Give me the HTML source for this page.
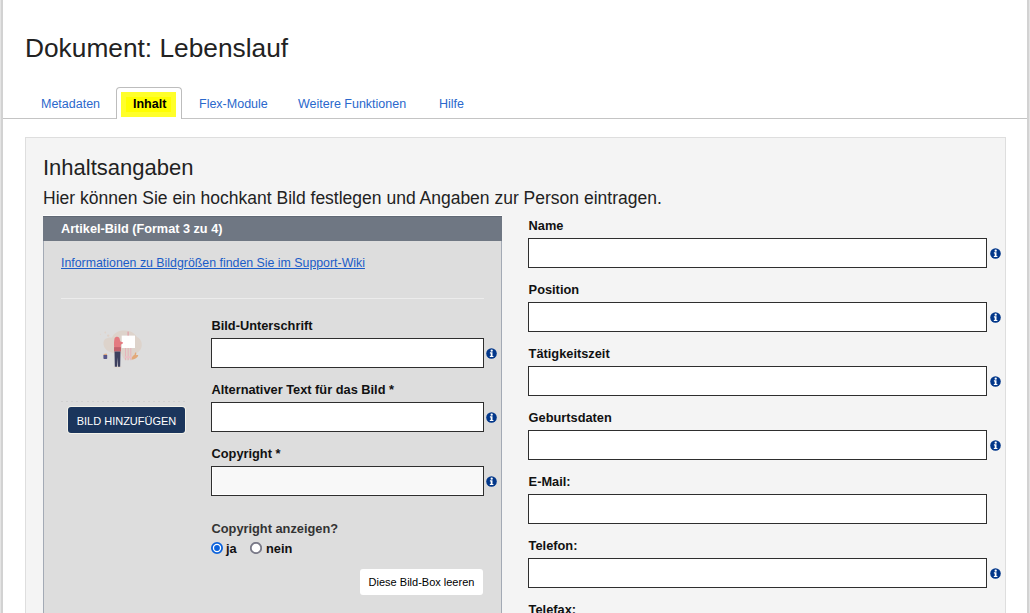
<!DOCTYPE html>
<html><head><meta charset="utf-8">
<style>
*{box-sizing:border-box;margin:0;padding:0}
html,body{width:1030px;height:613px;overflow:hidden;background:#fff;font-family:"Liberation Sans",sans-serif;color:#222}
.abs{position:absolute}
#lb{left:0;top:0;width:3px;height:613px;background:linear-gradient(90deg,#e4e4e4 0,#e4e4e4 1px,#d2d2d2 1px,#d2d2d2 3px)}
#rb{left:1027px;top:0;width:3px;height:613px;background:linear-gradient(90deg,#d2d2d2 0,#d2d2d2 2px,#e4e4e4 2px)}
h1{position:absolute;left:25px;top:33px;font-size:26.3px;font-weight:normal;color:#222;line-height:30px;white-space:nowrap}
#tabline{left:3px;top:118px;width:1024px;height:1px;background:#c4c4c4}
.tab{position:absolute;top:97px;font-size:12.5px;color:#2a68cc;white-space:nowrap;line-height:14px}
#acttab{left:116px;top:87px;width:66px;height:32px;border-radius:4px 4px 0 0;border:1px solid #bdbdbd;border-bottom:none;background:#fff}
#yel{left:121px;top:92px;width:55px;height:25px;background:#ffff2a}
#yel2{left:126px;top:97px;width:45px;height:15px;background:#ffff00}
#panel{left:25px;top:137px;width:981px;height:500px;background:#f4f4f4;border:1px solid #dedede}
h2{position:absolute;left:43px;top:156px;font-size:22px;font-weight:normal;color:#222;line-height:24px;white-space:nowrap}
.sub{position:absolute;left:43px;top:188px;font-size:17.5px;color:#222;line-height:20px;white-space:nowrap}
#box{left:43px;top:217px;width:459px;height:420px;background:#dddddd;border-left:1px solid #a3aab5;border-right:1px solid #a3aab5}
#boxh{left:43px;top:216px;width:459px;height:25px;background:#6f7783;border-top:1px solid #606874;box-shadow:0 -1px 0 #fff}
.bh{position:absolute;left:61px;top:222px;font-size:12.7px;font-weight:bold;color:#fff;line-height:14px;white-space:nowrap}
.link{position:absolute;left:61px;top:256px;font-size:12.35px;color:#1a5cc8;text-decoration:underline;line-height:14px;white-space:nowrap}
#sep{left:61px;top:298px;width:423px;height:1px;background:#ececec}
#dots{left:61px;top:401px;width:124px;height:1px;background:repeating-linear-gradient(90deg,#d0d0d0 0,#d0d0d0 2px,transparent 2px,transparent 5.1px)}
#addbtn{left:68px;top:407px;width:117px;height:26px;background:#1b355c;border-radius:3px;box-shadow:0 0 0 1px rgba(250,248,238,.75);overflow:hidden;color:#fff;font-size:11px;line-height:28px;text-align:center;white-space:nowrap}
.lbl{position:absolute;font-size:12.8px;font-weight:bold;color:#111;line-height:14px;white-space:nowrap}
.inp{position:absolute;height:30px;background:#fff;border:1px solid #2e2e2e;border-radius:0;box-shadow:inset 1px -1px 0 #fff}
.info{position:absolute;width:11px;height:11px}
#clr{left:360px;top:569px;width:123px;height:26px;background:#fff;border-radius:3px;font-size:11px;line-height:26px;text-align:center;color:#000;white-space:nowrap}
.radio{position:absolute;width:12px;height:12px;border-radius:50%}
</style></head><body>
<div class="abs" id="lb"></div>
<div class="abs" id="rb"></div>
<h1>Dokument: Lebenslauf</h1>
<div class="abs" id="tabline"></div>
<div class="tab" style="left:41px">Metadaten</div>
<div class="abs" id="acttab"></div>
<div class="abs" id="yel"></div><div class="abs" id="yel2"></div>
<div class="tab" style="left:133px;font-weight:bold;color:#000">Inhalt</div>
<div class="tab" style="left:199px">Flex-Module</div>
<div class="tab" style="left:298px">Weitere Funktionen</div>
<div class="tab" style="left:439px">Hilfe</div>
<div class="abs" id="panel"></div>
<h2>Inhaltsangaben</h2>
<div class="sub">Hier können Sie ein hochkant Bild festlegen und Angaben zur Person eintragen.</div>

<div class="abs" id="box"></div>
<div class="abs" id="boxh"></div>
<div class="bh">Artikel-Bild (Format 3 zu 4)</div>
<div class="link">Informationen zu Bildgrößen finden Sie im Support-Wiki</div>
<div class="abs" id="sep"></div>
<div class="abs" id="dots"></div>
<svg class="abs" style="left:98px;top:326px" width="48" height="44" viewBox="0 0 48 44">
<path d="M5.5 18C5 13 9 11 14 11.5C16 7 20 4.3 27 4.5C33 4.7 36 7 39 11C43 13 44.5 17 43.5 21C42.5 25 39 27 36 28C35 31 33 34 29 34.2C26 34.3 24.5 31 23.5 27.5C20 27.5 17 27.2 14 26.5C9 25.5 6 22 5.5 18Z" fill="#ddd3cb"/>
<circle cx="7.3" cy="6.5" r="0.9" fill="#e0d3ca"/><circle cx="10.2" cy="9.6" r="1.2" fill="#dfd1c8"/><circle cx="2.5" cy="8.3" r="0.6" fill="#e0d6d0"/>
<ellipse cx="19.5" cy="41" rx="4.5" ry="0.8" fill="#e2d8d0"/>
<rect x="23.7" y="9.6" width="13.3" height="12.4" fill="#fff"/>
<rect x="29.6" y="5.6" width="1" height="4" fill="#e0949e"/>
<path d="M27.5 22v12.2M30.2 22v12.2M32.8 22v12.2" stroke="#e6b0b8" stroke-width="0.9" fill="none"/>
<rect x="26.8" y="30.2" width="6.6" height="1.8" fill="#e9c0c6"/>
<path d="M16.6 12.3C17.2 10.8 19.6 10.3 21 11.4C22 12.5 21.9 14.6 22.4 15.6C23.4 16 24.3 16 25.1 16.4L24.9 17.4C23.6 17.7 22.9 18.2 22.8 19.3L22.8 21.3L16.2 21.3C15.8 18.5 16 14.5 16.6 12.3Z" fill="#e47a80"/>
<path d="M16.1 21L22.9 21L23 25.6L16 25.6Z" fill="#c9656f"/>
<path d="M16.1 22.3h6.9M16.1 23.9h6.9" stroke="#b85864" stroke-width="0.5"/>
<path d="M16.5 25.5h6l-0.3 15.3h-2.3l-0.4-9.5-0.5 9.5h-2.2z" fill="#3d3f5e"/>
<path d="M33.5 33.7C33.6 31.5 34.8 29.5 36.5 28.8C36.5 27.5 37.2 26.6 38 26.3C38.6 27.2 38.4 28.3 37.9 29.2C39 28.9 40 29 40.3 29.4C39.5 31.6 37 33.3 33.5 33.7Z" fill="#e2a878"/>
<rect x="5.4" y="28.8" width="3.8" height="4.2" rx="0.8" fill="#575689"/>
<path d="M5.6 29l0.4-1.5 0.8 1.1 0.6-1.4 0.6 1.3 0.7-1.3 0.4 1.8z" fill="#e2a878"/>
</svg>
<div class="abs" id="addbtn">BILD HINZUFÜGEN</div>

<div class="lbl" style="left:211.5px;top:319px">Bild-Unterschrift</div>
<div class="inp" style="left:211px;top:338px;width:273px"></div>
<div class="lbl" style="left:211.5px;top:383px">Alternativer Text für das Bild *</div>
<div class="inp" style="left:211px;top:402px;width:273px"></div>
<div class="lbl" style="left:211.5px;top:447px">Copyright *</div>
<div class="inp" style="left:211px;top:466px;width:273px;background:#f8f8f8"></div>
<div class="lbl" style="left:211.5px;top:522px;color:#333">Copyright anzeigen?</div>
<svg class="abs" style="left:211px;top:542px" width="12" height="12" viewBox="0 0 12 12"><circle cx="6" cy="6" r="5.1" fill="#fff" stroke="#0b62dc" stroke-width="1.8"/><circle cx="6" cy="6" r="2.9" fill="#0b62dc"/></svg>
<div class="lbl" style="left:226px;top:542px">ja</div>
<svg class="abs" style="left:250px;top:542px" width="12" height="12" viewBox="0 0 12 12"><circle cx="6" cy="6" r="5.2" fill="#fff" stroke="#7a7a88" stroke-width="1.8"/></svg>
<div class="lbl" style="left:266px;top:542px">nein</div>
<div class="abs" id="clr">Diese Bild-Box leeren</div>

<div class="lbl" style="left:528.6px;top:219px">Name</div>
<div class="inp" style="left:528px;top:238px;width:459px"></div>
<div class="lbl" style="left:528.6px;top:283px">Position</div>
<div class="inp" style="left:528px;top:302px;width:459px"></div>
<div class="lbl" style="left:528.6px;top:347px">Tätigkeitszeit</div>
<div class="inp" style="left:528px;top:366px;width:459px"></div>
<div class="lbl" style="left:528.6px;top:411px">Geburtsdaten</div>
<div class="inp" style="left:528px;top:430px;width:459px"></div>
<div class="lbl" style="left:528.6px;top:475px">E-Mail:</div>
<div class="inp" style="left:528px;top:494px;width:459px"></div>
<div class="lbl" style="left:528.6px;top:539px">Telefon:</div>
<div class="inp" style="left:528px;top:558px;width:459px"></div>
<div class="lbl" style="left:528.6px;top:603px">Telefax:</div>

<svg class="info" style="left:486px;top:348px" viewBox="0 0 11 11"><circle cx="5.5" cy="5.5" r="5.3" fill="#02378a"/><circle cx="5.7" cy="2.7" r="1.15" fill="#fff"/><path d="M3.9 4.3h2.6v3.6h.9v1.1H3.8V7.9h.9V5.4h-.8z" fill="#fff"/></svg>
<svg class="info" style="left:486px;top:412px" viewBox="0 0 11 11"><circle cx="5.5" cy="5.5" r="5.3" fill="#02378a"/><circle cx="5.7" cy="2.7" r="1.15" fill="#fff"/><path d="M3.9 4.3h2.6v3.6h.9v1.1H3.8V7.9h.9V5.4h-.8z" fill="#fff"/></svg>
<svg class="info" style="left:486px;top:476px" viewBox="0 0 11 11"><circle cx="5.5" cy="5.5" r="5.3" fill="#02378a"/><circle cx="5.7" cy="2.7" r="1.15" fill="#fff"/><path d="M3.9 4.3h2.6v3.6h.9v1.1H3.8V7.9h.9V5.4h-.8z" fill="#fff"/></svg>
<svg class="info" style="left:990px;top:248px" viewBox="0 0 11 11"><circle cx="5.5" cy="5.5" r="5.3" fill="#02378a"/><circle cx="5.7" cy="2.7" r="1.15" fill="#fff"/><path d="M3.9 4.3h2.6v3.6h.9v1.1H3.8V7.9h.9V5.4h-.8z" fill="#fff"/></svg>
<svg class="info" style="left:990px;top:312px" viewBox="0 0 11 11"><circle cx="5.5" cy="5.5" r="5.3" fill="#02378a"/><circle cx="5.7" cy="2.7" r="1.15" fill="#fff"/><path d="M3.9 4.3h2.6v3.6h.9v1.1H3.8V7.9h.9V5.4h-.8z" fill="#fff"/></svg>
<svg class="info" style="left:990px;top:376px" viewBox="0 0 11 11"><circle cx="5.5" cy="5.5" r="5.3" fill="#02378a"/><circle cx="5.7" cy="2.7" r="1.15" fill="#fff"/><path d="M3.9 4.3h2.6v3.6h.9v1.1H3.8V7.9h.9V5.4h-.8z" fill="#fff"/></svg>
<svg class="info" style="left:990px;top:440px" viewBox="0 0 11 11"><circle cx="5.5" cy="5.5" r="5.3" fill="#02378a"/><circle cx="5.7" cy="2.7" r="1.15" fill="#fff"/><path d="M3.9 4.3h2.6v3.6h.9v1.1H3.8V7.9h.9V5.4h-.8z" fill="#fff"/></svg>
<svg class="info" style="left:990px;top:568px" viewBox="0 0 11 11"><circle cx="5.5" cy="5.5" r="5.3" fill="#02378a"/><circle cx="5.7" cy="2.7" r="1.15" fill="#fff"/><path d="M3.9 4.3h2.6v3.6h.9v1.1H3.8V7.9h.9V5.4h-.8z" fill="#fff"/></svg>
</body></html>
